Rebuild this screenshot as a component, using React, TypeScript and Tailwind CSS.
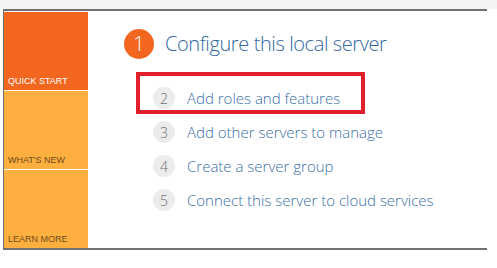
import React from 'react';

const tiles = [
  { label: 'QUICK START', bg: 'bg-[#f3661f]', text: 'text-white' },
  { label: "WHAT'S NEW", bg: 'bg-[#fdb03f]', text: 'text-[#6e4a1c]' },
  { label: 'LEARN MORE', bg: 'bg-[#fdb03f]', text: 'text-[#6e4a1c]' },
];

const steps = [
  { n: 2, label: 'Add roles and features' },
  { n: 3, label: 'Add other servers to manage' },
  { n: 4, label: 'Create a server group' },
  { n: 5, label: 'Connect this server to cloud services' },
];

export default function App() {
  return (
    <div className="w-[497px] h-[268px] bg-white overflow-hidden" style={{ fontFamily: '"Open Sans", "Liberation Sans", sans-serif' }}>
      <div className="h-[9px] bg-[#f4f4f4]" />
      <div className="ml-[3px] w-[484px] h-[241px] border-t-2 border-b-2 border-l border-[#717171] pt-px flex">
        {/* left tiles */}
        <div className="w-[84px] flex flex-col gap-px">
          {tiles.map((t) => (
            <div key={t.label} className={`flex-1 ${t.bg} flex items-end px-[4px] pb-[3px]`}>
              <span className={`${t.text} text-[9px] leading-[12px]`} style={{ fontFamily: '"Liberation Sans", sans-serif' }}>
                {t.label}
              </span>
            </div>
          ))}
        </div>

        {/* content */}
        <div className="relative flex-1 pl-[36px] pt-[17px]">
          <div className="flex items-center gap-[11px] h-[30px]">
            <div className="w-[30px] h-[30px] rounded-full bg-[#f3661f] flex items-center justify-center text-white text-[20px] font-light">
              1
            </div>
            <span className="text-[#33689f] text-[20px] font-light tracking-[-0.4px]">Configure this local server</span>
          </div>

          <div className="mt-[22px] pl-[29px] flex flex-col">
            {steps.map((s) => (
              <div key={s.n} className="flex items-center h-[34px] gap-[12px]">
                <div className="w-[22px] h-[22px] rounded-full bg-[#ececec] flex items-center justify-center text-[#6f6f6f] text-[14px] font-light">
                  {s.n}
                </div>
                <span className="text-[#3a6fa6] text-[15px] font-light">{s.label}</span>
              </div>
            ))}
          </div>

          {/* highlight box */}
          <div className="absolute left-[48px] top-[60px] w-[229px] h-[42px] border-4 border-[#e2202c]" />
        </div>
      </div>
    </div>
  );
}
